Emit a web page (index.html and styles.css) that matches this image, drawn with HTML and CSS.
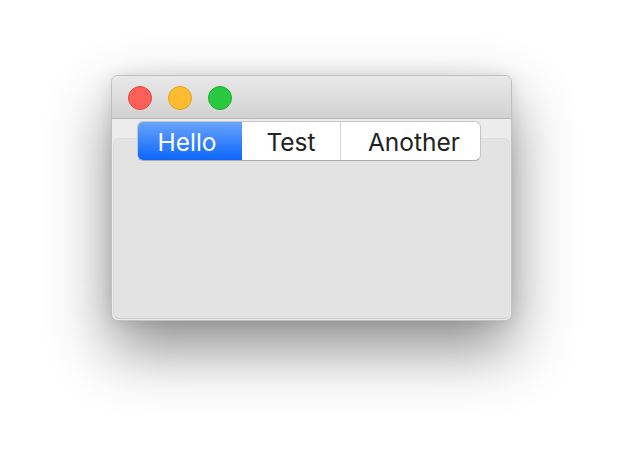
FILE: index.html
```html
<!doctype html>
<html lang="en">
<head>
    <meta charset="utf-8">
    <title>Segmented tabs</title>
    <link rel="stylesheet" href="styles.css">
</head>
<body>
	<div class="ventana">
		<div class="barra">
			<span class="boton rojo"></span>
			<span class="boton amarillo"></span>
			<span class="boton verde"></span>
		</div>
		<div class="contenido">
			<div class="segmentos">
				<div class="segmento activo">Hello</div>
				<div class="segmento test">Test</div>
				<div class="segmento otro">Another</div>
			</div>
			<div class="panel"></div>
		</div>
	</div>
</body>
</html>
```

FILE: styles.css
```css
html, body{
	height: 100%;
}
body{
	margin: 0;
	background: #fff;
	font-family: "Inter", "Liberation Sans", sans-serif;
	overflow: hidden;
}
.ventana{
	box-sizing: border-box;
	width: 401px;
	height: 246px;
	margin: 75px 0 0 111px;
	border: 1px solid #c0c0c0;
	border-radius: 7px;
	background: #ececec;
	overflow: hidden;
	display: flex;
	flex-direction: column;
	box-shadow: 0 28px 62px rgba(0,0,0,0.45), 0 0 16px rgba(0,0,0,0.1);
}
.barra{
	box-sizing: border-box;
	height: 43px;
	border-bottom: 1px solid #b9b9b9;
	background: linear-gradient(#e9e9e9, #d2d2d2);
	display: flex;
	align-items: center;
	gap: 16px;
	padding-left: 16px;
	padding-top: 1px;
}
.boton{
	box-sizing: border-box;
	width: 24px;
	height: 24px;
	border-radius: 50%;
}
.rojo{
	background: #fe5f57;
	border: 1px solid #e2463f;
}
.amarillo{
	background: #febc2e;
	border: 1px solid #dea123;
}
.verde{
	background: #28c840;
	border: 1px solid #1dad2b;
}
.contenido{
	flex: 1;
	display: flex;
	flex-direction: column;
	padding: 2px 1px 1px 1px;
}
.segmentos{
	position: relative;
	z-index: 1;
	display: flex;
	width: 344px;
	height: 40px;
	margin-left: 24px;
	box-sizing: border-box;
	border: 1px solid #c6c6c6;
	border-bottom-color: #ababab;
	border-radius: 6px;
	background: #fff;
	overflow: hidden;
}
.segmento{
	display: flex;
	align-items: center;
	justify-content: center;
	font-size: 24.5px;
	color: #222;
	box-sizing: border-box;
	padding-top: 2px;
}
.activo{
	width: 105px;
	color: #fff;
	background: linear-gradient(#6ba6fb, #0a64fe);
	margin: -1px 0 -1px -1px;
	padding-right: 5px;
}
.test{
	width: 99px;
	border-right: 1px solid #d6d6d6;
}
.otro{
	flex: 1;
	padding-left: 7px;
}
.panel{
	flex: 1;
	margin-top: -23px;
	border: 1px solid #dedede;
	border-bottom-color: #cdcdcd;
	border-radius: 6px;
	background: #e3e3e3;
}
```
